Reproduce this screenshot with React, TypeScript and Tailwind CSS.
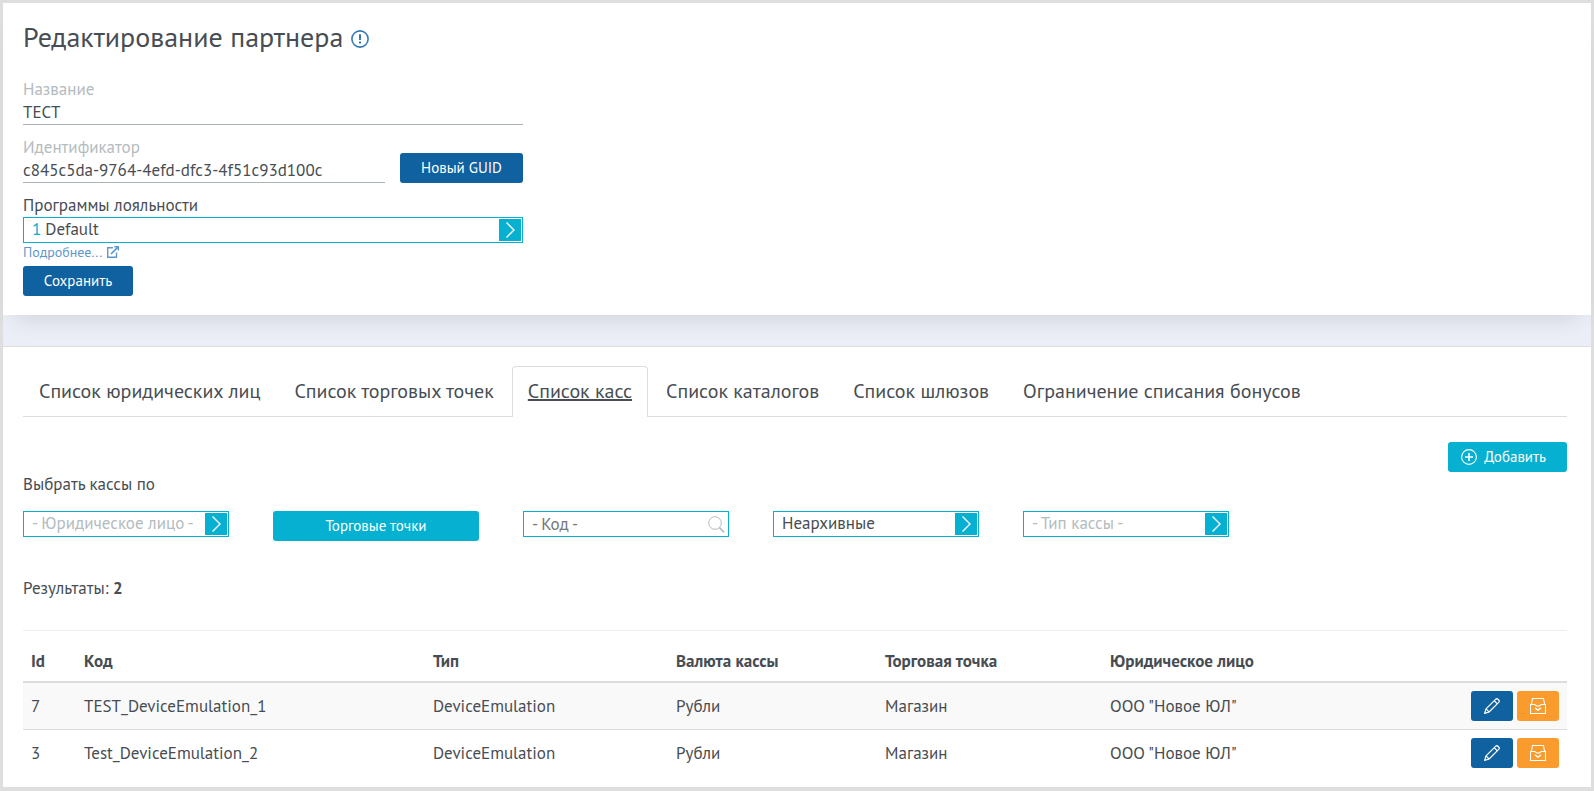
import { useState } from "react";
import type { ReactNode } from "react";

const tabs = [
  "Список юридических лиц",
  "Список торговых точек",
  "Список касс",
  "Список каталогов",
  "Список шлюзов",
  "Ограничение списания бонусов",
];

const devices = [
  { id: 7, code: "TEST_DeviceEmulation_1", type: "DeviceEmulation", currency: "Рубли", shop: "Магазин", legal: 'ООО "Новое ЮЛ"' },
  { id: 3, code: "Test_DeviceEmulation_2", type: "DeviceEmulation", currency: "Рубли", shop: "Магазин", legal: 'ООО "Новое ЮЛ"' },
];

function InfoIcon() {
  return (
    <svg width="18" height="18" viewBox="0 0 18 18" fill="none" stroke="#337ab7" aria-hidden="true">
      <circle cx="9" cy="9" r="8.1" strokeWidth="1.6" />
      <path d="M9 4.200v5.800" strokeWidth="2" />
      <path d="M9 11.400v2" strokeWidth="2" />
    </svg>
  );
}

function ExternalIcon() {
  return (
    <svg width="12" height="12" viewBox="0 0 12 12" fill="none" stroke="currentColor" strokeWidth="1.4" aria-hidden="true">
      <path d="M6 1.800H.7v9.500h8.800V6.500" />
      <path d="M4 8 10.600 1.400" strokeWidth="1.7" />
      <path d="M7.400.7h3.900v3.900" />
    </svg>
  );
}

function ArrowBox() {
  return (
    <span className="pointer-events-none absolute inset-y-px right-px flex w-[22px] items-center justify-center bg-[#05b0d0]">
      <svg width="10" height="16" viewBox="0 0 10 16" fill="none" stroke="#fff" strokeWidth="1.4" aria-hidden="true">
        <path d="M1.500.5 9 8 1.500 15.500" />
      </svg>
    </span>
  );
}

function SearchIcon() {
  return (
    <svg width="17" height="17" viewBox="0 0 17 17" fill="none" stroke="#b3bcc0" aria-hidden="true">
      <circle cx="7" cy="7" r="6.3" />
      <path d="m11.400 11.600 4.800 4.800" strokeWidth="1.5" />
    </svg>
  );
}

function PlusIcon() {
  return (
    <svg width="16" height="16" viewBox="0 0 16 16" fill="none" stroke="#fff" aria-hidden="true">
      <circle cx="8" cy="8" r="7.4" strokeWidth="1.1" />
      <path d="M8 4v8M4 8h8" strokeWidth="1.6" />
    </svg>
  );
}

function PencilIcon() {
  return (
    <svg width="16" height="16" viewBox="0 0 16 16" fill="none" stroke="#fff" strokeWidth="1.2" strokeLinejoin="round" aria-hidden="true">
      <path d="M.6 15.400 2 10.900 11.600 1.300Q12.800.2 14 1.300L14.700 2Q15.800 3.200 14.700 4.400L5.100 14Z" />
      <path d="M10.200 2.700 13.300 5.800M2 10.900 5.100 14" />
    </svg>
  );
}

function ArchiveIcon() {
  return (
    <svg width="16" height="16" viewBox="0 0 16 16" fill="none" stroke="#fff" strokeWidth="1.1" aria-hidden="true">
      <path d="M.5 6.500h4.300c.5 0 .5 1.600 3.200 1.600s2.700-1.600 3.200-1.600h4.300v9H.5z" />
      <path d="M1.400 6.500 2.500.5h11l1.100 6" />
      <path d="m5 9.800 3 2.600 3-2.600" strokeWidth="1.4" />
    </svg>
  );
}

function FilterSelect({ label, muted, options }: { label: string; muted?: boolean; options: string[] }) {
  return (
    <div className="relative w-[206px] border border-[#05b0d0]">
      <select
        aria-label={label}
        className={
          muted
            ? "block h-6 w-full appearance-none bg-white pr-6 pb-[2px] pl-2 leading-[22px] text-[#b3bcc0] outline-none"
            : "block h-6 w-full appearance-none bg-white pr-6 pb-[2px] pl-2 leading-[22px] outline-none"
        }
      >
        {options.map((o) => (
          <option key={o}>{o}</option>
        ))}
      </select>
      <ArrowBox />
    </div>
  );
}

function Th({ className, children }: { className?: string; children?: ReactNode }) {
  return <th className={`px-2 py-2 text-left leading-6 font-bold ${className ?? ""}`}>{children}</th>;
}

export default function App() {
  const [active, setActive] = useState(2);
  const [name, setName] = useState("ТЕСТ");
  const [guid, setGuid] = useState("c845c5da-9764-4efd-dfc3-4f51c93d100c");

  return (
    <div className="flex min-h-screen flex-col border-3 border-b-4 border-[#dedede] bg-[#ebeef6] font-['PT_Sans','Noto_Sans',sans-serif] text-[17px] leading-6 text-[#474d52]">
      <section className="bg-white px-5 pt-4 pb-[19px] shadow-[0_15px_22px_-12px_rgba(0,0,0,0.12)]">
        <h1 className="flex items-center gap-2 text-[28px] leading-9">
          Редактирование партнера
          <button type="button" aria-label="Справка" className="pt-1">
            <InfoIcon />
          </button>
        </h1>

        <form className="mt-[22px] w-[500px] max-w-full" onSubmit={(e) => e.preventDefault()}>
          <label htmlFor="name" className="block text-[#b3bcc0]">
            Название
          </label>
          <input
            id="name"
            value={name}
            onChange={(e) => setName(e.target.value)}
            className="block h-6 w-full border-b border-[#aab2b7] pb-[2px] leading-[22px] outline-none"
          />

          <div className="mt-[10px] flex items-end gap-[15px]">
            <div className="flex-1">
              <label htmlFor="guid" className="block text-[#b3bcc0]">
                Идентификатор
              </label>
              <input
                id="guid"
                value={guid}
                onChange={(e) => setGuid(e.target.value)}
                className="block h-6 w-full border-b border-[#aab2b7] pb-[2px] leading-[22px] outline-none"
              />
            </div>
            <button type="button" className="h-[30px] w-[123px] rounded-[3px] bg-[#0f619f] text-[15px] text-white">
              Новый GUID
            </button>
          </div>

          <label htmlFor="loyalty" className="mt-[10px] block">
            Программы лояльности
          </label>
          <div className="relative flex border border-[#05b0d0] pl-2">
            <span className="leading-[22px] text-[#05b0d0]">1</span>
            <select id="loyalty" className="h-6 flex-1 appearance-none pr-6 pb-[2px] pl-1 leading-[22px] outline-none">
              <option>Default</option>
            </select>
            <ArrowBox />
          </div>
          <a href="#more" className="flex items-center gap-[5px] text-sm leading-[18px] text-[#5f98c9]">
            Подробнее...
            <ExternalIcon />
          </a>
          <button type="submit" className="mt-[5px] block h-[30px] w-[110px] rounded-[3px] bg-[#0f619f] text-[15px] text-white">
            Сохранить
          </button>
        </form>
      </section>

      <section className="mt-[31px] flex-1 border-t border-[#dedede] bg-white pt-[19px] pr-6 pl-5">
        <nav className="flex gap-[2px] border-b border-[#dddddd] text-xl" role="tablist">
          {tabs.map((t, i) => (
            <button
              key={t}
              type="button"
              role="tab"
              aria-selected={i === active}
              onClick={() => setActive(i)}
              className={
                i === active
                  ? "-mb-px h-[51px] rounded-t-sm border border-b-0 border-[#dddddd] bg-white px-[15px] pb-[2px] underline"
                  : "h-[50px] border border-transparent px-[15px]"
              }
            >
              {t}
            </button>
          ))}
        </nav>

        <div className="mt-[25px] flex justify-end">
          <button type="button" className="flex h-[30px] items-center gap-[7px] rounded-[3px] bg-[#05b0d0] pr-[21px] pl-[13px] text-[15px] text-white">
            <PlusIcon />
            Добавить
          </button>
        </div>

        <p>Выбрать кассы по</p>
        <div className="mt-[15px] flex flex-wrap items-start gap-x-11">
          <FilterSelect label="Юридическое лицо" muted options={["- Юридическое лицо -"]} />
          <button type="button" className="h-[30px] w-[206px] rounded-[3px] bg-[#05b0d0] text-[15px] text-white">
            Торговые точки
          </button>
          <div className="relative w-[206px] border border-[#05b0d0]">
            <input
              aria-label="Код"
              placeholder="- Код -"
              className="block h-6 w-full bg-white pr-6 pl-2 outline-none placeholder:text-[#777777]"
            />
            <span className="pointer-events-none absolute inset-y-0 right-[3px] flex items-center">
              <SearchIcon />
            </span>
          </div>
          <FilterSelect label="Архивность" options={["Неархивные"]} />
          <FilterSelect label="Тип кассы" muted options={["- Тип кассы -"]} />
        </div>

        <p className="mt-[35px]">
          Результаты: <b>2</b>
        </p>
        <hr className="mt-[30px] border-[#eeeeee]" />

        <table className="mt-[10px] w-full table-fixed border-collapse">
          <thead>
            <tr className="border-b-2 border-[#dddddd]">
              <Th className="w-[53px]">Id</Th>
              <Th className="w-[349px]">Код</Th>
              <Th className="w-[243px]">Тип</Th>
              <Th className="w-[209px]">Валюта кассы</Th>
              <Th className="w-[225px]">Торговая точка</Th>
              <Th>Юридическое лицо</Th>
              <Th className="w-[104px]" />
            </tr>
          </thead>
          <tbody>
            {devices.map((d) => (
              <tr key={d.id} className="border-b border-[#dddddd] last:border-b-0 odd:bg-[#f9f9f9]">
                <td className="px-2">{d.id}</td>
                <td className="px-2">{d.code}</td>
                <td className="px-2">{d.type}</td>
                <td className="px-2">{d.currency}</td>
                <td className="px-2">{d.shop}</td>
                <td className="px-2">{d.legal}</td>
                <td className="p-2">
                  <div className="flex justify-end gap-1">
                    <button type="button" aria-label="Редактировать" className="flex h-[30px] w-[42px] items-center justify-center rounded-[3px] bg-[#0f619f]">
                      <PencilIcon />
                    </button>
                    <button type="button" aria-label="В архив" className="flex h-[30px] w-[42px] items-center justify-center rounded-[3px] bg-[#f99b2d]">
                      <ArchiveIcon />
                    </button>
                  </div>
                </td>
              </tr>
            ))}
          </tbody>
        </table>
      </section>
    </div>
  );
}
